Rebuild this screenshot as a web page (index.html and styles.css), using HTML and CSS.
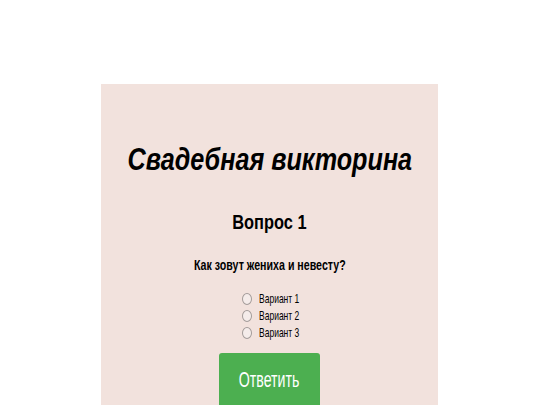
FILE: index.html
```html
<!DOCTYPE html>
<html lang="ru">
<head>
<meta charset="utf-8">
<link rel="stylesheet" href="styles.css">
</head>
<body>
<div class="card">
  <h1 class="title"><span class="sq sq-title">Свадебная викторина</span></h1>
  <h2 class="qnum"><span class="sq sq-qnum">Вопрос 1</span></h2>
  <p class="question"><span class="sq sq-question">Как зовут жениха и невесту?</span></p>
  <div class="options">
    <label class="opt"><span class="radio"></span><span class="sq sq-opt">Вариант 1</span></label>
    <label class="opt"><span class="radio"></span><span class="sq sq-opt">Вариант 2</span></label>
    <label class="opt"><span class="radio"></span><span class="sq sq-opt">Вариант 3</span></label>
  </div>
  <button class="btn"><span class="sq sq-btn">Ответить</span></button>
</div>
</body>
</html>
```
FILE: styles.css
```css
html, body { margin: 0; padding: 0; background: #fff; }
body { font-family: "Liberation Sans", Arial, sans-serif; overflow: hidden; height: 405px; }
.card {
  width: 337px;
  margin: 84px 0 0 101px;
  background: #f2e2dd;
  height: 340px;
  display: flex;
  flex-direction: column;
  align-items: center;
  padding-top: 57px;
  box-sizing: border-box;
}
.sq { display: inline-block; white-space: nowrap; }
.sq-title { transform: scaleX(0.8); }
.sq-qnum { transform: scaleX(0.82); }
.sq-question { transform: scaleX(0.76); }
.sq-opt { transform: scaleX(0.63); transform-origin: left center; }
.sq-btn { transform: scaleX(0.63); }
.title { margin: 0; font-size: 31.5px; font-weight: bold; font-style: italic; color: #000; line-height: 36px; white-space: nowrap; }
.qnum { margin: 33px 0 0; font-size: 20px; font-weight: bold; line-height: 24px; color: #000; }
.question { margin: 23px 0 0; font-size: 14px; font-weight: bold; line-height: 16px; color: #000; white-space: nowrap; }
.options { margin-top: 17px; display: flex; flex-direction: column; width: 58px; }
.opt { display: flex; align-items: center; font-size: 13.5px; line-height: 17px; height: 17px; color: #000; }
.radio { flex: none; width: 10px; height: 12px; border: 1px solid #a39b99; border-radius: 50%; margin: 0 7px 0 1px; box-sizing: border-box; background: #f5ecea; }
.btn {
  margin-top: 12px;
  width: 101px;
  height: 60px;
  background: #4caf50;
  color: #fff;
  border: none;
  border-radius: 3px;
  font-family: "Liberation Sans", Arial, sans-serif;
  font-size: 22.5px;
  line-height: 26px;
  padding: 0 0 6px;
}
```
